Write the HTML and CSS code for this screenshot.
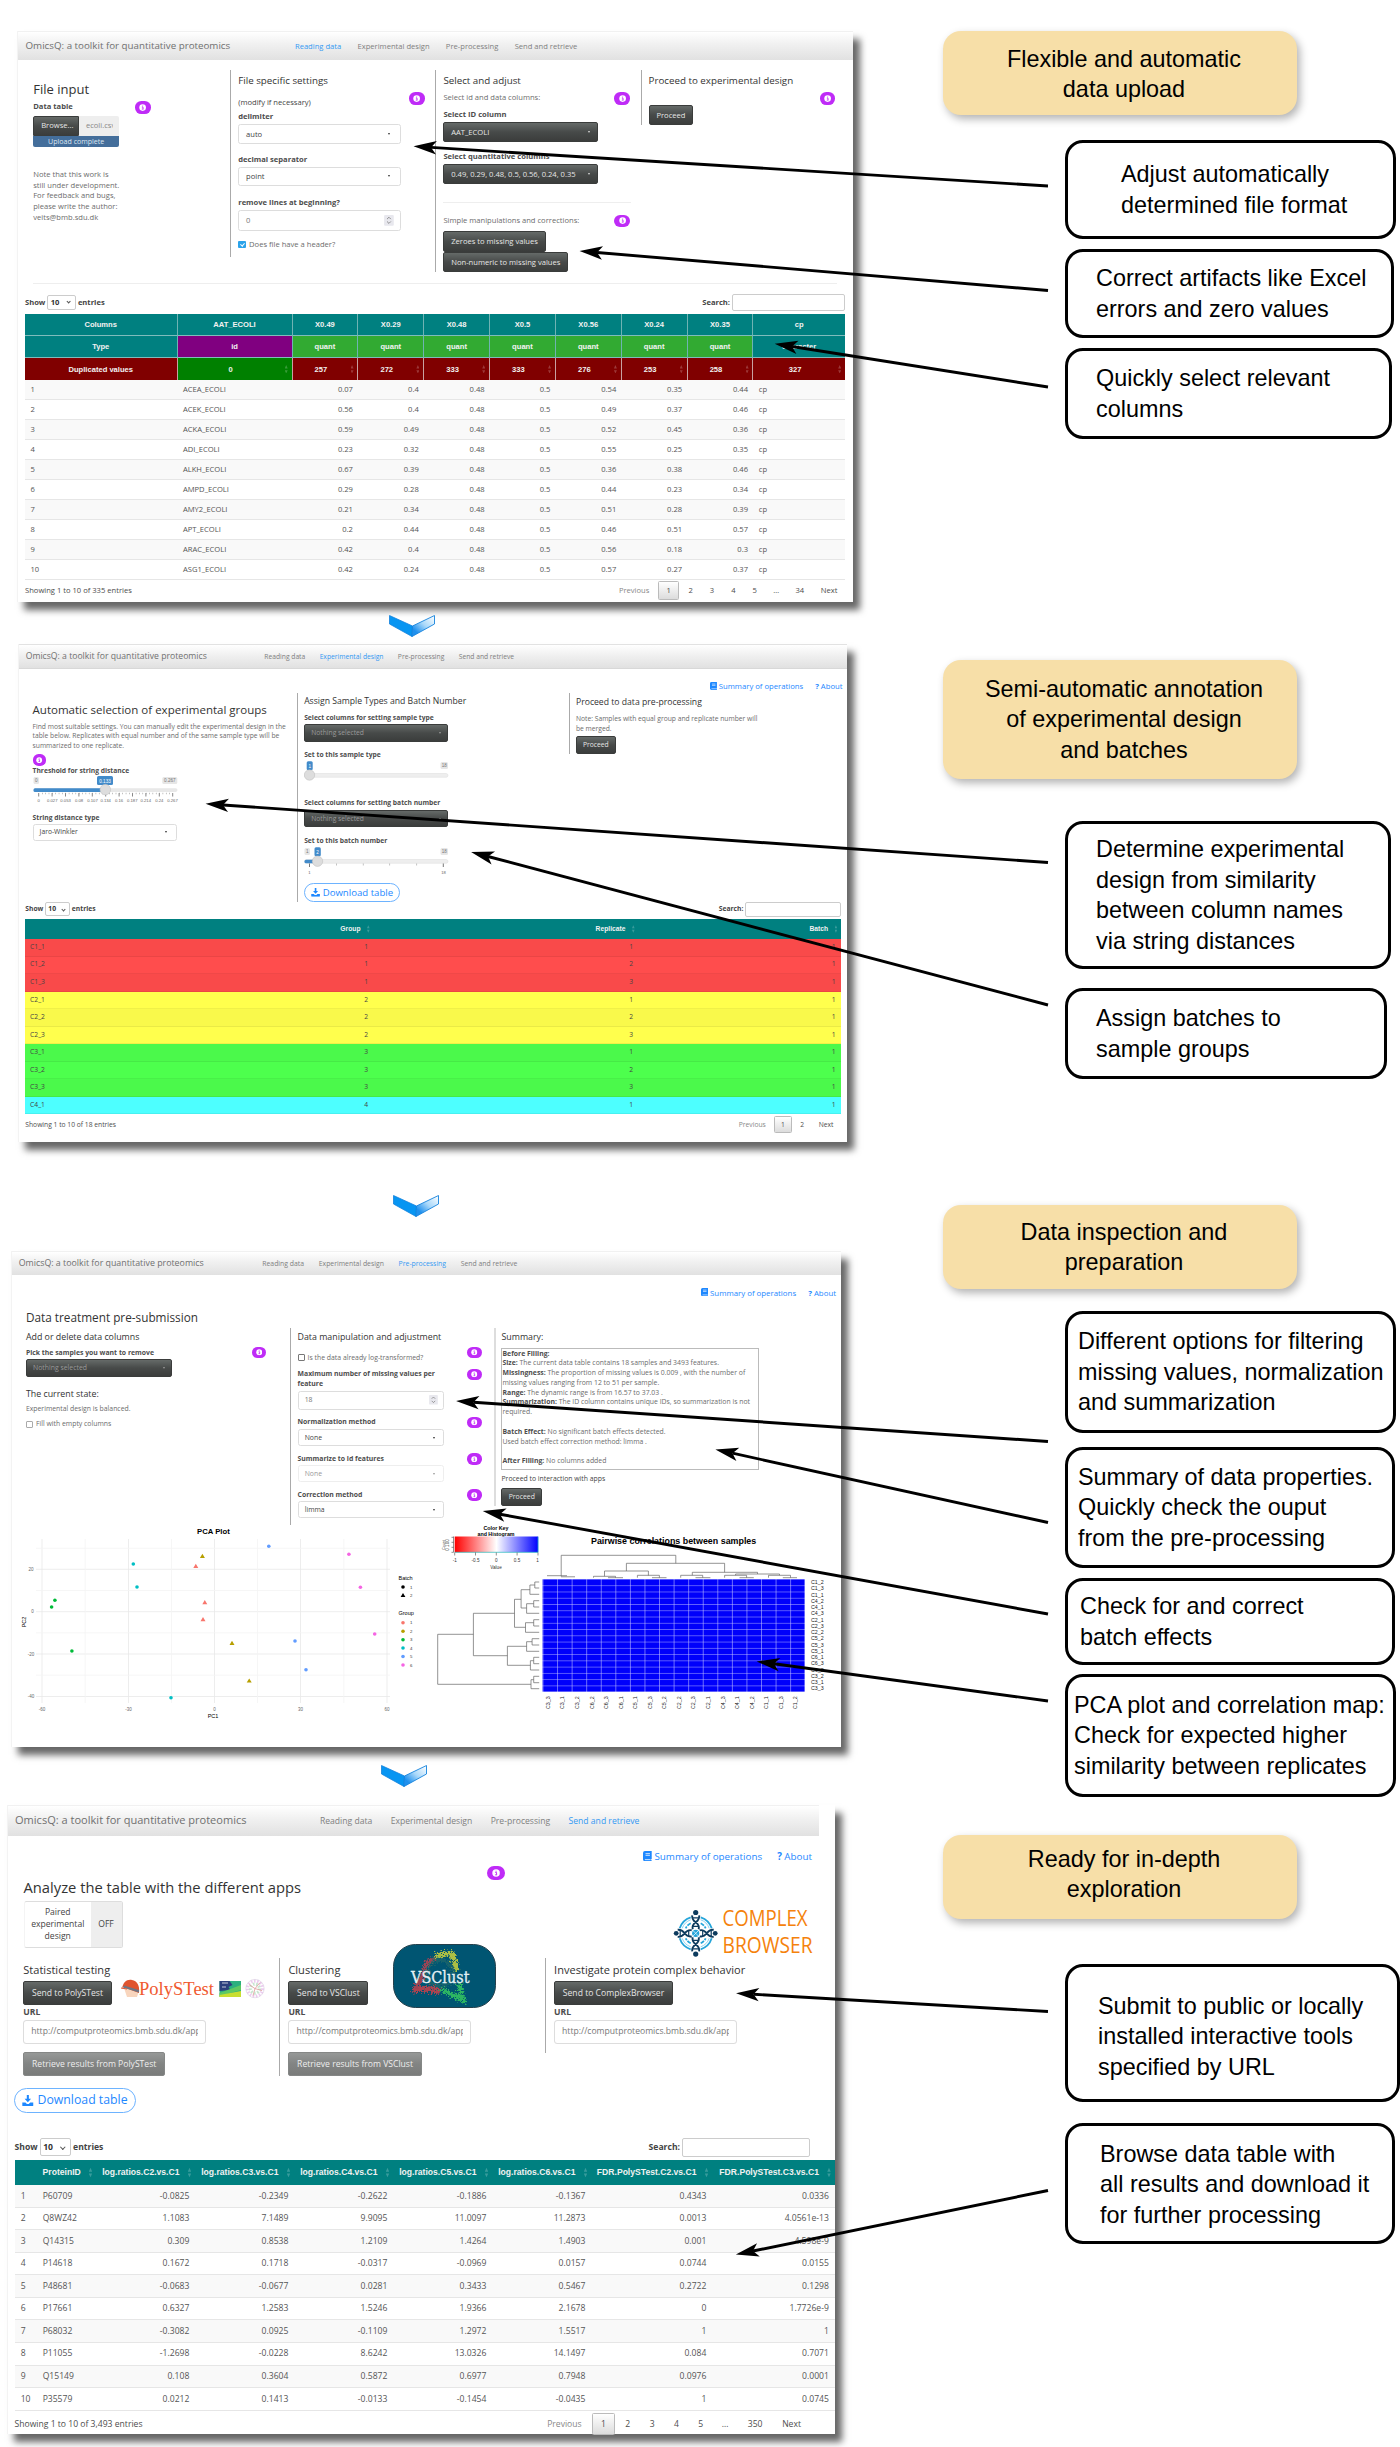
FILE: index.html
```html
<!DOCTYPE html>
<html lang="en">
<head>
<meta charset="utf-8">
<title>OmicsQ workflow</title>
<link rel="stylesheet" href="styles.css">
</head>
<body>
<svg class="defs" width="0" height="0" aria-hidden="true">
  <defs>
    <symbol id="info" viewBox="0 0 10 10"><circle cx="5" cy="5" r="4.6" fill="#fff"/><path d="M4 4.3h1.6v2.6M3.9 7.1h2.4M5 2.2v1.2" stroke="#bf2bf7" stroke-width="1.2" fill="none"/></symbol>
    <symbol id="book" viewBox="0 0 14 16"><path d="M3 0h11v12.5h-1v2h1V16H3a3 3 0 0 1-3-3V3a3 3 0 0 1 3-3z" fill="#1e88ff"/><path d="M4 4h7M4 6.7h7M3 13.5h9" stroke="#fff" stroke-width="1.2"/></symbol>
    <symbol id="dl" viewBox="0 0 16 16"><path d="M6.5 0h3v5.5h3.2L8 10.5 3.300 5.500h3.200zM0 11h4.500l2.200 2h2.600l2.200-2H16v4.200a.8.8 0 0 1-.8.8H.8a.8.8 0 0 1-.8-.8z" fill="#1e88ff"/></symbol>
    <linearGradient id="shine" x1="0" y1="1" x2="1" y2="0"><stop offset="0.2" stop-color="#1e90ee"/><stop offset="0.55" stop-color="#a9d8fa"/><stop offset="1" stop-color="#fff"/></linearGradient>
    <symbol id="chevron" viewBox="0 0 46 22"><path d="M.5.500 23.500 11l-.500 10.500L.500 9z" fill="#0795f2" stroke="#1482dc" stroke-width=".8"/><path d="M45.500.500 23.500 11l-.500 10.500L45.500 9z" fill="url(#shine)" stroke="#1482dc" stroke-width=".9"/></symbol>
    <linearGradient id="key"><stop offset="0" stop-color="#f00"/><stop offset=".5" stop-color="#fff"/><stop offset="1" stop-color="#00f"/></linearGradient>
    <pattern id="cells" x="542.5" y="1579" width="14.567" height="6.261" patternUnits="userSpaceOnUse"><rect width="14.567" height="6.261" fill="#0000fb"/><path d="M0 0H14.567M0 0V6.261" stroke="#c4c4ff" stroke-width="1.100"/></pattern>
    <filter id="scatter" x="-10%" y="-10%" width="120%" height="120%"><feTurbulence type="fractalNoise" baseFrequency=".7" numOctaves="2" seed="4"/><feDisplacementMap in="SourceGraphic" scale="11" xChannelSelector="R" yChannelSelector="G"/></filter>
    <marker id="head" markerUnits="userSpaceOnUse" markerWidth="24" markerHeight="16" refX="-17.5" refY="7" orient="auto-start-reverse" viewBox="-24 0 24 14" overflow="visible"><path d="M0 7-23 .3-17.500 7-23 13.700z"/></marker>
  </defs>
</svg>
<main class="figure">

<!-- Reading data -->
<section class="panel p1">
  <header class="nav"><span class="brand">OmicsQ: a toolkit for quantitative proteomics</span><a class="on">Reading data</a><a>Experimental design</a><a>Pre-processing</a><a>Send and retrieve</a></header>
  <div class="cols">
    <div class="col file">
      <h3>File input</h3><label>Data table</label>
      <div class="upload"><span class="btn">Browse...</span><span class="fname">ecoli.csv</span></div>
      <div class="progress">Upload complete</div>
      <p class="note">Note that this work is<br>still under development.<br>For feedback and bugs,<br>please write the author:<br>veits@bmb.sdu.dk</p>
      <i class="badge"><svg><use href="#info"/></svg></i>
    </div>
    <div class="col settings">
      <h4>File specific settings</h4><p class="dark">(modify if necessary)</p>
      <label>delimiter</label><div class="select">auto</div>
      <label>decimal separator</label><div class="select">point</div>
      <label>remove lines at beginning?</label><div class="input num">0<svg class="spin" viewBox="0 0 10 11"><rect width="10" height="11" rx="1" fill="#e8e8ee"/><path d="M3 4.300 5 2.300 7 4.300M3 6.700 5 8.700 7 6.700" fill="none" stroke="#777" stroke-width=".8"/></svg></div>
      <div class="check"><i class="box checked"></i>Does file have a header?</div>
      <i class="badge"><svg><use href="#info"/></svg></i>
    </div>
    <div class="col adjust">
      <h4>Select and adjust</h4><p>Select id and data columns:</p>
      <label>Select ID column</label><div class="btn drop">AAT_ECOLI</div>
      <label>Select quantitative columns</label><div class="btn drop">0.49, 0.29, 0.48, 0.5, 0.56, 0.24, 0.35</div>
      <hr><p>Simple manipulations and corrections:</p>
      <span class="btn">Zeroes to missing values</span><span class="btn">Non-numeric to missing values</span>
      <i class="badge"><svg><use href="#info"/></svg></i><i class="badge second"><svg><use href="#info"/></svg></i>
    </div>
    <div class="col proceed"><h4>Proceed to experimental design</h4><span class="btn">Proceed</span><i class="badge"><svg><use href="#info"/></svg></i></div>
  </div>
  <hr class="rule">
  <div class="tools"><b>Show</b><span class="len">10</span><b>entries</b><b class="search">Search:</b><span class="sbox"></span></div>
  <table>
    <colgroup><col class="w1"><col class="w2"><col class="w3"><col class="w3"><col class="w3"><col class="w3"><col class="w3"><col class="w3"><col class="w3"><col></colgroup>
    <thead>
      <tr><th>Columns</th><th>AAT_ECOLI</th><th>X0.49</th><th>X0.29</th><th>X0.48</th><th>X0.5</th><th>X0.56</th><th>X0.24</th><th>X0.35</th><th>cp</th></tr>
      <tr class="type"><th>Type</th><th class="id">id</th><th class="q">quant</th><th class="q">quant</th><th class="q">quant</th><th class="q">quant</th><th class="q">quant</th><th class="q">quant</th><th class="q">quant</th><th>character</th></tr>
      <tr class="dup"><th>Duplicated values</th><th class="zero sort">0</th><th class="sort">257</th><th class="sort">272</th><th class="sort">333</th><th class="sort">333</th><th class="sort">276</th><th class="sort">253</th><th class="sort">258</th><th class="sort">327</th></tr>
    </thead>
    <tbody>
      <tr><td>1<td>ACEA_ECOLI<td>0.07<td>0.4<td>0.48<td>0.5<td>0.54<td>0.35<td>0.44<td>cp</tr>
      <tr><td>2<td>ACEK_ECOLI<td>0.56<td>0.4<td>0.48<td>0.5<td>0.49<td>0.37<td>0.46<td>cp</tr>
      <tr><td>3<td>ACKA_ECOLI<td>0.59<td>0.49<td>0.48<td>0.5<td>0.52<td>0.45<td>0.36<td>cp</tr>
      <tr><td>4<td>ADI_ECOLI<td>0.23<td>0.32<td>0.48<td>0.5<td>0.55<td>0.25<td>0.35<td>cp</tr>
      <tr><td>5<td>ALKH_ECOLI<td>0.67<td>0.39<td>0.48<td>0.5<td>0.36<td>0.38<td>0.46<td>cp</tr>
      <tr><td>6<td>AMPD_ECOLI<td>0.29<td>0.28<td>0.48<td>0.5<td>0.44<td>0.23<td>0.34<td>cp</tr>
      <tr><td>7<td>AMY2_ECOLI<td>0.21<td>0.34<td>0.48<td>0.5<td>0.51<td>0.28<td>0.39<td>cp</tr>
      <tr><td>8<td>APT_ECOLI<td>0.2<td>0.44<td>0.48<td>0.5<td>0.46<td>0.51<td>0.57<td>cp</tr>
      <tr><td>9<td>ARAC_ECOLI<td>0.42<td>0.4<td>0.48<td>0.5<td>0.56<td>0.18<td>0.3<td>cp</tr>
      <tr><td>10<td>ASG1_ECOLI<td>0.42<td>0.24<td>0.48<td>0.5<td>0.57<td>0.27<td>0.37<td>cp</tr>
    </tbody>
  </table>
  <footer class="pager"><span>Showing 1 to 10 of 335 entries</span><span class="prev">Previous</span><span class="cur">1</span><span class="pg">2</span><span class="pg">3</span><span class="pg">4</span><span class="pg">5</span><span class="pg">…</span><span class="pg wide">34</span><span class="next">Next</span></footer>
</section>
<svg class="chev chev1"><use href="#chevron"/></svg>

<!-- Experimental design -->
<section class="panel p2">
  <header class="nav"><span class="brand">OmicsQ: a toolkit for quantitative proteomics</span><a>Reading data</a><a class="on">Experimental design</a><a>Pre-processing</a><a>Send and retrieve</a></header>
  <div class="links"><span><svg class="ico"><use href="#book"/></svg>Summary of operations</span><span><b>?</b> About</span></div>
  <div class="cols">
    <div class="col auto">
      <h3>Automatic selection of experimental groups</h3>
      <p>Find most suitable settings. You can manually edit the experimental design in the<br>table below. Replicates with equal number and of the same sample type will be<br>summarized to one replicate.</p>
      <i class="badge inline"><svg><use href="#info"/></svg></i>
      <label>Threshold for string distance</label>
      <svg class="slider" viewBox="32 777 150 28" width="150" height="28">
        <rect x="32.500" y="778" width="5.500" height="7" rx="1.500" fill="#e6e6e6"/><rect x="96" y="777" width="16" height="9" rx="1.500" fill="#428bca"/><rect x="161.300" y="778" width="15" height="7" rx="1.500" fill="#e6e6e6"/>
        <text x="35.200" y="783.200">0</text><text x="104" y="783.500" class="on">0.133</text><text x="168.800" y="783.200">0.267</text>
        <rect x="32.500" y="789.300" width="144" height="3.600" rx="1.800" fill="#e8e8e8"/><rect x="32.500" y="789.300" width="72" height="3.600" rx="1.500" fill="#428bca"/>
        <path d="M37.700 794v3.500m13.400-3.500v3.500m13.400-3.500v3.500m13.400-3.500v3.500m13.400-3.500v3.500m13.400-3.500v3.500m13.400-3.500v3.500m13.400-3.500v3.500m13.400-3.500v3.500m13.400-3.500v3.500m13.400-3.500v3.500" stroke="#555" stroke-width=".7"/>
        <path d="M41 794.500H170" stroke="#999" stroke-width="1.300" stroke-dasharray=".6 2.750"/>
        <circle cx="104.300" cy="790.600" r="5.300" fill="#ddd" stroke="#bbb" stroke-width=".5"/>
        <g class="tk"><text x="37.700" y="803">0</text><text x="51.300" y="803">0.027</text><text x="64.600" y="803">0.053</text><text x="78" y="803">0.08</text><text x="91.500" y="803">0.107</text><text x="104.700" y="803">0.134</text><text x="118" y="803">0.16</text><text x="131.300" y="803">0.187</text><text x="144.800" y="803">0.214</text><text x="158.300" y="803">0.24</text><text x="171.500" y="803">0.267</text></g>
      </svg>
      <label>String distance type</label><div class="select">Jaro-Winkler</div>
    </div>
    <div class="col assign">
      <h4>Assign Sample Types and Batch Number</h4>
      <label>Select columns for setting sample type</label><div class="btn drop dim">Nothing selected</div>
      <label>Set to this sample type</label>
      <svg class="slider" viewBox="304 761 150 22" width="150" height="22">
        <rect x="306.700" y="761.300" width="6" height="9" rx="1.500" fill="#428bca"/><rect x="440.500" y="762" width="7.500" height="7" rx="1.500" fill="#e6e6e6"/><text x="309.700" y="768" class="on">1</text><text x="444.200" y="767.300">18</text>
        <rect x="304.500" y="773.500" width="143.500" height="3.800" rx="1.900" fill="#eee" stroke="#ddd" stroke-width=".5"/><circle cx="309.500" cy="775" r="5.200" fill="#ddd" stroke="#bbb" stroke-width=".5"/>
      </svg>
      <label>Select columns for setting batch number</label><div class="btn drop dim">Nothing selected</div>
      <label>Set to this batch number</label>
      <svg class="slider" viewBox="304 846 150 28" width="150" height="28">
        <rect x="304.500" y="847" width="5.500" height="7" rx="1.500" fill="#e6e6e6"/><rect x="314.500" y="846.300" width="6.300" height="9" rx="1.500" fill="#428bca"/><rect x="440.500" y="847" width="7.500" height="7" rx="1.500" fill="#e6e6e6"/><text x="307.200" y="852.300">1</text><text x="317.600" y="853" class="on">2</text><text x="444.200" y="852.300">18</text>
        <rect x="304.500" y="858.500" width="143.500" height="3.800" rx="1.900" fill="#eee" stroke="#ddd" stroke-width=".5"/><rect x="304.500" y="858.700" width="13" height="3.500" rx="1.500" fill="#428bca"/>
        <path d="M309.500 862.500v3.500M443.300 862.500v3.500" stroke="#555" stroke-width=".8"/><path d="M336.500 862.500v2m26.800-2v2m26.300-2v2m27-2v2" stroke="#999" stroke-width=".6"/>
        <circle cx="317.500" cy="860.200" r="5.200" fill="#ddd" stroke="#bbb" stroke-width=".5"/><g class="tk"><text x="309.500" y="872.500">1</text><text x="443.500" y="872.500">18</text></g>
      </svg>
      <span class="download"><svg class="ico"><use href="#dl"/></svg>Download table</span>
    </div>
    <div class="col merge"><h4>Proceed to data pre-processing</h4><p>Note: Samples with equal group and replicate number will<br>be merged.</p><span class="btn">Proceed</span></div>
  </div>
  <div class="tools"><b>Show</b><span class="len">10</span><b>entries</b><b class="search">Search:</b><span class="sbox"></span></div>
  <table>
    <colgroup><col class="w1"><col class="w2"><col class="w3"><col></colgroup>
    <thead><tr><th></th><th class="sort">Group</th><th class="sort">Replicate</th><th class="sort">Batch</th></tr></thead>
    <tbody>
      <tr class="red"><td>C1_1<td>1<td>1<td>1</tr>
      <tr class="red"><td>C1_2<td>1<td>2<td>1</tr>
      <tr class="red"><td>C1_3<td>1<td>3<td>1</tr>
      <tr class="yellow"><td>C2_1<td>2<td>1<td>1</tr>
      <tr class="yellow"><td>C2_2<td>2<td>2<td>1</tr>
      <tr class="yellow"><td>C2_3<td>2<td>3<td>1</tr>
      <tr class="green"><td>C3_1<td>3<td>1<td>1</tr>
      <tr class="green"><td>C3_2<td>3<td>2<td>1</tr>
      <tr class="green"><td>C3_3<td>3<td>3<td>1</tr>
      <tr class="cyan"><td>C4_1<td>4<td>1<td>1</tr>
    </tbody>
  </table>
  <footer class="pager"><span>Showing 1 to 10 of 18 entries</span><span class="prev">Previous</span><span class="cur">1</span><span class="pg">2</span><span class="next">Next</span></footer>
</section>
<svg class="chev chev2"><use href="#chevron"/></svg>

<!-- Pre-processing -->
<section class="panel p3">
  <header class="nav"><span class="brand">OmicsQ: a toolkit for quantitative proteomics</span><a>Reading data</a><a>Experimental design</a><a class="on">Pre-processing</a><a>Send and retrieve</a></header>
  <div class="links"><span><svg class="ico"><use href="#book"/></svg>Summary of operations</span><span><b>?</b> About</span></div>
  <h3>Data treatment pre-submission</h3>
  <div class="cols">
    <div class="col remove">
      <h4>Add or delete data columns</h4><label>Pick the samples you want to remove</label><div class="btn drop dim">Nothing selected</div>
      <h4 class="state">The current state:</h4><p>Experimental design is balanced.</p><div class="check"><i class="box"></i>Fill with empty columns</div>
      <i class="badge"><svg><use href="#info"/></svg></i>
    </div>
    <div class="col manip">
      <h4>Data manipulation and adjustment</h4><div class="check"><i class="box strong"></i>Is the data already log-transformed?</div>
      <label>Maximum number of missing values per<br>feature</label><div class="input num">18<svg class="spin" viewBox="0 0 10 11"><rect width="10" height="11" rx="1" fill="#e8e8ee"/><path d="M3 4.300 5 2.300 7 4.300M3 6.700 5 8.700 7 6.700" fill="none" stroke="#777" stroke-width=".8"/></svg></div>
      <label>Normalization method</label><div class="select">None</div>
      <label>Summarize to id features</label><div class="select off">None</div>
      <label>Correction method</label><div class="select">limma</div>
      <i class="badge b1"><svg><use href="#info"/></svg></i><i class="badge b2"><svg><use href="#info"/></svg></i><i class="badge b3"><svg><use href="#info"/></svg></i><i class="badge b4"><svg><use href="#info"/></svg></i><i class="badge b5"><svg><use href="#info"/></svg></i>
    </div>
    <div class="col summary">
      <h4>Summary:</h4>
      <div class="report"><b>Before Filling:</b><br><b>Size:</b> The current data table contains 18 samples and 3493 features.<br><b>Missingness:</b> The proportion of missing values is 0.009 , with the number of<br>missing values ranging from 12 to 51 per sample.<br><b>Range:</b> The dynamic range is from 16.57 to 37.03 .<br><b>Summarization:</b> The ID column contains unique IDs, so summarization is not<br>required.<br><br><b>Batch Effect:</b> No significant batch effects detected.<br>Used batch effect correction method: limma .<br><br><b>After Filling:</b> No columns added</div>
      <p class="dark">Proceed to interaction with apps</p><span class="btn">Proceed</span>
    </div>
  </div>
  <svg class="plots" viewBox="11 1525 830 222">
    <g stroke="#e9e9e9" stroke-width=".8"><path d="M36 1569.300H390M36 1611.700H390M36 1654H390M36 1696.500H390M42 1539V1703M128.500 1539V1703M214.500 1539V1703M300.500 1539V1703M387 1539V1703"/><path stroke="#f4f4f4" d="M36 1548.300H390M36 1590.500H390M36 1632.800H390M36 1675.200H390M85.200 1539V1703M171.500 1539V1703M257.500 1539V1703M343.800 1539V1703"/></g>
    <text class="t" x="213.400" y="1534" font-size="7.700">PCA Plot</text>
    <g font-size="4.500" fill="#666" text-anchor="middle"><text x="31" y="1571">20</text><text x="32.500" y="1613.300">0</text><text x="31" y="1655.600">-20</text><text x="31" y="1698">-40</text><text x="42" y="1711">-60</text><text x="128.500" y="1711">-30</text><text x="214.500" y="1711">0</text><text x="300.500" y="1711">30</text><text x="387" y="1711">60</text></g>
    <text x="213" y="1717.800" font-size="5.500" text-anchor="middle">PC1</text><text transform="translate(25.500 1622) rotate(-90)" font-size="5.500" text-anchor="middle">PC2</text>
    <g fill="#619cff"><circle cx="268.800" cy="1546.300" r="1.800"/><circle cx="295" cy="1641" r="1.800"/><circle cx="306" cy="1669.700" r="1.800"/><circle cx="403" cy="1656.500" r="1.800"/></g>
    <g fill="#f564e3"><circle cx="348.900" cy="1554.300" r="1.800"/><circle cx="360.400" cy="1587.300" r="1.800"/><circle cx="374.700" cy="1634" r="1.800"/><circle cx="403" cy="1665" r="1.800"/></g>
    <g fill="#00bfc4"><circle cx="133.300" cy="1564" r="1.800"/><circle cx="137" cy="1587" r="1.800"/><circle cx="171" cy="1697.700" r="1.800"/><circle cx="403" cy="1648" r="1.800"/></g>
    <g fill="#00ba38"><circle cx="54.900" cy="1600.300" r="1.800"/><circle cx="51.600" cy="1607" r="1.800"/><circle cx="71.900" cy="1651" r="1.800"/><circle cx="403" cy="1639.700" r="1.800"/></g>
    <circle cx="403" cy="1622.700" r="1.800" fill="#f8766d"/><circle cx="403" cy="1631.200" r="1.800" fill="#b79f00"/><circle cx="403" cy="1587" r="1.800"/><path d="M403 1593l2.400 4h-4.800z"/>
    <path fill="#b79f00" d="M202.400 1553.700l2.500 4.200h-5zM232 1640.700l2.500 4.200h-5zM249.200 1678.400l2.500 4.200h-5z"/>
    <path fill="#f8766d" d="M195.800 1563.700l2.500 4.200h-5zM204.800 1600l2.500 4.200h-5zM203 1617l2.500 4.200h-5z"/>
    <g font-size="5.500"><text x="398.500" y="1580">Batch</text><text x="398.500" y="1615.300">Group</text></g>
    <g font-size="4.300" fill="#333"><text x="410" y="1588.500">1</text><text x="410" y="1597">2</text><text x="410" y="1624.200">1</text><text x="410" y="1632.700">2</text><text x="410" y="1641.200">3</text><text x="410" y="1649.500">4</text><text x="410" y="1658">5</text><text x="410" y="1666.500">6</text></g>
    <text class="t" x="496" y="1530" font-size="5.300">Color Key</text><text class="t" x="496" y="1536.300" font-size="5.300">and Histogram</text>
    <rect x="454.700" y="1536.500" width="83.500" height="15.800" fill="url(#key)"/><path d="M454.700 1552.300h83.300v-15.500" fill="none" stroke="#2bb" stroke-width=".7"/><path d="M454.700 1552.500v3m20.800-3v3m20.800-3v3m20.800-3v3m20.900-3v3M453.500 1536.500v15.800m0 0h-2m2-5h-2m2-5h-2m2-5h-2" fill="none" stroke="#444" stroke-width=".6"/>
    <g font-size="4.600" text-anchor="middle" fill="#333"><text x="454.700" y="1562">-1</text><text x="475.500" y="1562">-0.5</text><text x="496.300" y="1562">0</text><text x="517" y="1562">0.5</text><text x="537.500" y="1562">1</text><text x="496" y="1569">Value</text><text transform="translate(448.500 1545) rotate(-90)">0 100</text><text transform="translate(445 1545) rotate(-90)" font-size="3.500">Count</text></g>
    <text class="t" x="673.600" y="1543.500" font-size="8.900">Pairwise correlations between samples</text>
    <g fill="none" stroke="#666" stroke-width=".7">
      <path d="M547 1575.700h20M561 1576.800h14M561.200 1576.300v-21h114.600v8M626.400 1571v-7.700h98.200v9M604.500 1576.300v-5.300h43.900v4.500M692.300 1575.300v-3h65.200v1.700M735.600 1575.300v-1.300h43.900v1.300M593.500 1577.700v-1.400h22v1.400M608 1577.700h15M637.400 1577.700v-2.400h22v2.400M652 1577.700h14.500M680.700 1577.700v-2.400h22v2.400M695.500 1577.700h14.900M724.600 1577.700v-2.400h22v2.400M739.500 1577.700h14.300M768.500 1577.700v-2.400h22v2.400M782.800 1577.700h14.200"/>
      <path d="M473.400 1634.300h-35.700v50h93.300M514.500 1613.300h-41.100v42.400h34M521.100 1599.300h-6.600v28h11M530 1589.700h-8.900v18.300h5.500M534.800 1585h-4.900v9.300h9.300M539.200 1582h-4.400v6h4.400M533.700 1603.700h-7.100v9.600h12.600M539.200 1600.700h-5.500v6.300h5.500M533.700 1622.700h-8.200v9.600h13.700M539.200 1619.700h-5.500v6.300h5.500M526.600 1646.300h-19.200v19h23M532 1641.700h-5.400v9.600h12.600M539.200 1638.700h-7.100v6.300h7.100M533.700 1660.700h-3.300v9.300h8.800M539.200 1657.300h-5.500v6.400h5.500M533.700 1679.700h-2.700v9h8.200M539.200 1676.300h-5.500v6.400h5.500"/>
    </g>
    <rect x="542.500" y="1579" width="262.200" height="112.700" fill="url(#cells)"/>
    <g font-size="5.300" fill="#222"><text x="811" y="1584">C1_2</text><text x="811" y="1590.300">C1_3</text><text x="811" y="1596.500">C1_1</text><text x="811" y="1602.800">C4_2</text><text x="811" y="1609">C4_1</text><text x="811" y="1615.300">C4_3</text><text x="811" y="1621.500">C2_1</text><text x="811" y="1627.800">C2_3</text><text x="811" y="1634">C2_2</text><text x="811" y="1640.300">C5_2</text><text x="811" y="1646.500">C5_3</text><text x="811" y="1652.800">C5_1</text><text x="811" y="1659">C6_1</text><text x="811" y="1665.300">C6_3</text><text x="811" y="1671.500">C6_2</text><text x="811" y="1677.800">C3_2</text><text x="811" y="1684">C3_1</text><text x="811" y="1690.300">C3_3</text></g>
    <g font-size="5.300" fill="#222" transform="translate(0 1709) rotate(-90)"><text x="0" y="549.700">C3_3</text><text x="0" y="564.300">C3_1</text><text x="0" y="578.900">C3_2</text><text x="0" y="593.500">C6_2</text><text x="0" y="608">C6_3</text><text x="0" y="622.600">C6_1</text><text x="0" y="637.200">C5_1</text><text x="0" y="651.700">C5_3</text><text x="0" y="666.300">C5_2</text><text x="0" y="680.900">C2_2</text><text x="0" y="695.400">C2_3</text><text x="0" y="710">C2_1</text><text x="0" y="724.600">C4_3</text><text x="0" y="739.100">C4_1</text><text x="0" y="753.700">C4_2</text><text x="0" y="768.300">C1_1</text><text x="0" y="782.800">C1_3</text><text x="0" y="797.400">C1_2</text></g>
  </svg>
</section>
<svg class="chev chev3"><use href="#chevron"/></svg>

<!-- Send and retrieve -->
<section class="panel p4">
  <header class="nav"><span class="brand">OmicsQ: a toolkit for quantitative proteomics</span><a>Reading data</a><a>Experimental design</a><a>Pre-processing</a><a class="on">Send and retrieve</a></header>
  <div class="links"><span><svg class="ico"><use href="#book"/></svg>Summary of operations</span><span><b>?</b> About</span></div>
  <h3>Analyze the table with the different apps</h3>
  <div class="switch"><span>Paired<br>experimental<br>design</span><span class="off">OFF</span></div>
  <i class="badge"><svg><use href="#info"/></svg></i>
  <div class="cols">
    <div class="col stat">
      <h4>Statistical testing</h4>
      <div class="send"><span class="btn">Send to PolySTest</span>
        <svg class="polylogo" viewBox="120 1977 146 24" width="146" height="24">
          <path d="M124 1988l3 9h10l2-6z" fill="#f8d5bd"/><path d="M122 1989c1-7 5-10 10-9 5 1 8 5 7 13l-16-6z" fill="#e0542f"/><path d="M124 1985.500l15 4.500v2.500l-16-5z" fill="#6f7583"/><path d="M121 1988l6 1" stroke="#e0542f"/>
          <text x="139" y="1994.500" font-family="Liberation Serif, serif" font-size="18.500" fill="#f05a30" textLength="75" lengthAdjust="spacingAndGlyphs">PolySTest</text>
          <rect x="219.500" y="1981" width="21.500" height="16" fill="#2bb07f"/><path d="M219.500 1981h10l3 4-4 2 2 3-11 1z" fill="#2b3f7d"/><path d="M219.500 1993l21.500-8v5l-21.500 6z" fill="#5ec962"/><path d="M219.500 1995l21.500-4v6h-21.500z" fill="#c8de30"/><path d="M222 1983h6M222 1987h4" stroke="#fff" stroke-width=".7"/>
          <g fill="none" stroke-width="3.200" stroke-dasharray="1.600 1.500" opacity=".65"><circle cx="255" cy="1988.600" r="7.500" stroke="#e3b0e8"/><circle cx="255" cy="1988.600" r="4.500" stroke="#a9d9b6"/></g><circle cx="255" cy="1988.600" r="9.200" fill="none" stroke="#d8cfe0" stroke-width=".6"/><path d="M255 1988.600l5-6M255 1988.600l-6-4M255 1988.600l-2 7M255 1988.600l7 2" stroke="#e09a9a" stroke-width=".8"/>
        </svg></div>
      <label>URL</label><div class="input url">http://computproteomics.bmb.sdu.dk/apps</div><span class="btn faded">Retrieve results from PolySTest</span>
    </div>
    <div class="col clust"><h4>Clustering</h4><span class="btn">Send to VSClust</span><label>URL</label><div class="input url">http://computproteomics.bmb.sdu.dk/apps</div><span class="btn faded">Retrieve results from VSClust</span></div>
    <div class="col cpx"><h4>Investigate protein complex behavior</h4><span class="btn">Send to ComplexBrowser</span><label>URL</label><div class="input url">http://computproteomics.bmb.sdu.dk/apps</div></div>
  </div>
  <svg class="vslogo" viewBox="393 1944 103 64" width="103" height="64">
    <rect x="393.500" y="1944.500" width="102" height="63" rx="22" fill="#005572" stroke="#24404c"/>
    <g fill="none" filter="url(#scatter)" opacity=".85"><path d="M412 1990q18-3 28 2" stroke="#c9404c" stroke-width="6"/><path d="M415 1988q10-12 11-24l9-6" stroke="#b8404f" stroke-width="5"/><path d="M435 1957q12-5 18-2l4 16" stroke="#cbd23e" stroke-width="5"/><path d="M441 1989l22 11-4-17" stroke="#35c860" stroke-width="5"/><circle cx="440" cy="1973" r="13" stroke="#2f7268" stroke-width="4" opacity=".6"/></g>
    <text x="411" y="1983" font-family="DejaVu Serif, serif" font-size="16.500" fill="#e4f1f5" stroke="#e4f1f5" stroke-width=".3" textLength="58.500" lengthAdjust="spacingAndGlyphs">VSClust</text>
  </svg>
  <svg class="cblogo" viewBox="672 1898 148 64" width="148" height="64">
    <g transform="translate(695.700 1933.300)"><g fill="none" stroke="#25a5da" stroke-width="1.800"><path d="M5-16A17 17 0 0 1 16-5M-5-16A17 17 0 0 0-16-5M5 16A17 17 0 0 0 16 5M-5 16A17 17 0 0 1-16 5"/><path d="M5-10A11 11 0 0 1 10-5M-5-10A11 11 0 0 0-10-5M5 10A11 11 0 0 0 10 5M-5 10A11 11 0 0 1-10 5" stroke-dasharray="4 1"/><path d="M5-13.500A14 14 0 0 1 13.500-5M-5-13.500A14 14 0 0 0-13.500-5M5 13.500A14 14 0 0 0 13.500 5M-5 13.500A14 14 0 0 1-13.500 5" stroke="#8fd3ef" stroke-width="1"/></g>
      <g fill="none" stroke="#0d3b5e" stroke-width="1.900"><path d="M-3.500-18Q-4-14 0-11T3-4M3.500-18Q4-14 0-11T-3-4M-3.500 18Q-4 14 0 11T3 4M3.500 18Q4 14 0 11T-3 4M-18-3.500Q-14-4-11 0T-4 3M-18 3.500Q-14 4-11 0T-4-3M18-3.500Q14-4 11 0T4 3M18 3.500Q14 4 11 0T4-3"/><path d="M-3-15.500h6M-3-7h6M-3 15.500h6M-3 7h6M-15.500-3v6M-7-3v6M15.500-3v6M7-3v6" stroke-width="1.200"/></g>
      <g fill="#0d3b5e"><circle cy="-20.800" r="2.600"/><circle cy="20.800" r="2.600"/><circle cx="-19.500" r="2.400"/><circle cx="19.500" r="2.400"/></g><circle r="3.600" fill="#25a5da"/><path d="M-3-3 3 3M3-3-3 3" stroke="#fff" stroke-width=".7"/></g>
    <g font-family="Open Sans, sans-serif" font-size="21.500" fill="#f5820c"><text x="722.500" y="1926" textLength="85" lengthAdjust="spacingAndGlyphs">COMPLEX</text><text x="722.500" y="1952.500" textLength="90" lengthAdjust="spacingAndGlyphs">BROWSER</text></g>
  </svg>
  <span class="download"><svg class="ico"><use href="#dl"/></svg>Download table</span>
  <div class="tools"><b>Show</b><span class="len">10</span><b>entries</b><b class="search">Search:</b><span class="sbox"></span></div>
  <table>
    <colgroup><col class="w1"><col class="w2"><col class="w3"><col class="w3"><col class="w3"><col class="w3"><col class="w3"><col class="w4"><col></colgroup>
    <thead><tr><th></th><th class="sort">ProteinID</th><th class="sort">log.ratios.C2.vs.C1</th><th class="sort">log.ratios.C3.vs.C1</th><th class="sort">log.ratios.C4.vs.C1</th><th class="sort">log.ratios.C5.vs.C1</th><th class="sort">log.ratios.C6.vs.C1</th><th class="sort">FDR.PolySTest.C2.vs.C1</th><th class="sort">FDR.PolySTest.C3.vs.C1</th></tr></thead>
    <tbody>
      <tr><td>1<td>P60709<td>-0.0825<td>-0.2349<td>-0.2622<td>-0.1886<td>-0.1367<td>0.4343<td>0.0336</tr>
      <tr><td>2<td>Q8WZ42<td>1.1083<td>7.1489<td>9.9095<td>11.0097<td>11.2873<td>0.0013<td>4.0561e-13</tr>
      <tr><td>3<td>Q14315<td>0.309<td>0.8538<td>1.2109<td>1.4264<td>1.4903<td>0.001<td>4.598e-9</tr>
      <tr><td>4<td>P14618<td>0.1672<td>0.1718<td>-0.0317<td>-0.0969<td>0.0157<td>0.0744<td>0.0155</tr>
      <tr><td>5<td>P48681<td>-0.0683<td>-0.0677<td>0.0281<td>0.3433<td>0.5467<td>0.2722<td>0.1298</tr>
      <tr><td>6<td>P17661<td>0.6327<td>1.2583<td>1.5246<td>1.9366<td>2.1678<td>0<td>1.7726e-9</tr>
      <tr><td>7<td>P68032<td>-0.3082<td>0.0925<td>-0.1109<td>1.2972<td>1.5517<td>1<td>1</tr>
      <tr><td>8<td>P11055<td>-1.2698<td>-0.0228<td>8.6242<td>13.0326<td>14.1497<td>0.084<td>0.7071</tr>
      <tr><td>9<td>Q15149<td>0.108<td>0.3604<td>0.5872<td>0.6977<td>0.7948<td>0.0976<td>0.0001</tr>
      <tr><td>10<td>P35579<td>0.0212<td>0.1413<td>-0.0133<td>-0.1454<td>-0.0435<td>1<td>0.0745</tr>
    </tbody>
  </table>
  <footer class="pager"><span>Showing 1 to 10 of 3,493 entries</span><span class="prev">Previous</span><span class="cur">1</span><span class="pg">2</span><span class="pg">3</span><span class="pg">4</span><span class="pg">5</span><span class="pg">…</span><span class="pg wide">350</span><span class="next">Next</span></footer>
</section>

<!-- Stage titles and callouts -->
<h2 class="stage s1">Flexible and automatic<br>data upload</h2>
<h2 class="stage s2">Semi-automatic annotation<br>of experimental design<br>and batches</h2>
<h2 class="stage s3">Data inspection and<br>preparation</h2>
<h2 class="stage s4">Ready for in-depth<br>exploration</h2>
<p class="call c1">Adjust automatically<br>determined file format</p>
<p class="call c2">Correct artifacts like Excel<br>errors and zero values</p>
<p class="call c3">Quickly select relevant<br>columns</p>
<p class="call c4">Determine experimental<br>design from similarity<br>between column names<br>via string distances</p>
<p class="call c5">Assign batches to<br>sample groups</p>
<p class="call c6">Different options for filtering<br>missing values, normalization<br>and summarization</p>
<p class="call c7">Summary of data properties.<br>Quickly check the ouput<br>from the pre-processing</p>
<p class="call c8">Check for and correct<br>batch effects</p>
<p class="call c9">PCA plot and correlation map:<br>Check for expected higher<br>similarity between replicates</p>
<p class="call c10">Submit to public or locally<br>installed interactive tools<br>specified by URL</p>
<p class="call c11">Browse data table with<br>all results and download it<br>for further processing</p>

<svg class="arrows" viewBox="0 0 1400 2447">
  <g stroke="#000" stroke-width="2.900" fill="none">
    <path marker-end="url(#head)" d="M1048 186 431 147.400"/>
    <path marker-end="url(#head)" d="M1048 290.500 597 252.500"/>
    <path marker-end="url(#head)" d="M1048 387 792 346.500"/>
    <path marker-end="url(#head)" d="M1048 862.500 223 805"/>
    <path marker-end="url(#head)" d="M1048 1005 488 856.500"/>
    <path marker-end="url(#head)" d="M1048 1441.500 473.500 1402.200"/>
    <path marker-end="url(#head)" d="M1048 1522.500 732.500 1453.200"/>
    <path marker-end="url(#head)" d="M1048 1614 500 1514.200"/>
    <path marker-end="url(#head)" d="M1048 1701 774 1663.800"/>
    <path marker-end="url(#head)" d="M1048 2011.500 753.500 1994.300"/>
    <path marker-end="url(#head)" d="M1048 2190.500 753 2251"/>
  </g>
</svg>
</main>
</body>
</html>
```

FILE: styles.css
```css
* { box-sizing: border-box; }
body { margin: 0; background: #fff; font-family: "Open Sans", sans-serif; }
h2, h3, h4, p, hr { margin: 0; font-weight: 400; }
i { font-style: normal; }
.defs { position: absolute; }
.figure { position: relative; width: 1400px; height: 2447px; overflow: hidden; }

/* windows on the figure canvas */
.panel { position: absolute; background: #fff; color: #6c6c6c; line-height: 1.43; box-shadow: 7px 8px 7px rgba(0, 0, 0, .6); white-space: nowrap; border-left: 1px solid #f3f3f3; }
.p1 { left: 17px; top: 31px; width: 836px; height: 571px; font-size: 7.6px; }
.p2 { left: 18px; top: 644px; width: 829px; height: 498px; font-size: 6.73px; }
.p3 { left: 11px; top: 1251px; width: 830px; height: 496px; font-size: 6.87px; }
.p4 { left: 7px; top: 1805px; width: 828px; height: 629px; font-size: 8.6px; }

.nav { display: flex; align-items: center; background: linear-gradient(#fff, #f0f0f0 45%, #e1e1e1); border-top: 1px solid #f1f1f1; color: #808080; }
.p2 .nav { border-top-color: #e2e2e2; border-bottom: 1px solid #d8d8d8; }
.brand { flex: 0 0 27.57em; font-size: 1.286em; color: #707070; margin-top: -1px; }
.nav a { margin-right: 2.14em; }
.nav .on { color: #3399f3; }
.p1 .nav { height: 29px; padding-left: 7.5px; }
.p2 .nav { height: 25px; padding-left: 6.7px; }
.p3 .nav { height: 24px; padding-left: 6.7px; }
.p4 .nav { height: 30.5px; padding-left: 7px; width: 811px; }

.links { display: flex; justify-content: flex-end; gap: 12px; color: #1e88ff; font-size: 1.143em; line-height: 14px; }
.links .ico { width: .9em; height: 1.05em; margin-right: .25em; vertical-align: -.12em; }
.p2 .links { height: 24px; align-items: flex-end; padding-right: 4.5px; }
.p3 .links { height: 35px; align-items: center; padding-right: 5px; }
.p4 .links { height: 42.5px; align-items: center; padding-right: 23px; gap: 15px; }

.cols { display: flex; align-items: flex-start; margin-left: 7px; }
.col { position: relative; flex: none; display: grid; justify-items: start; padding-left: 1.08em; align-content: start; }
.col + .col { border-left: 1px solid #aaa; padding-left: calc(1.08em - 1.2px); }
h3 { font-size: 1.714em; color: #333; line-height: 1.1; }
h4 { font-size: 1.286em; color: #333; line-height: 1.1; align-self: center; }
.col p { align-self: center; }
.col .dark { color: #444; }
label { font-weight: 700; color: #4d4d4d; align-self: end; line-height: 2em; }
hr { border: 0; border-top: 1px solid #eee; }

.btn { display: flex; align-items: center; padding: 0 .9em; color: #e6e6e6; background: linear-gradient(#656a68, #474a49 50%, #3b3d3c); border: .5px solid #3a3c3b; border-radius: 2px; }
.drop { position: relative; }
.drop::after, .select::after { content: ""; margin-left: auto; border: .26em solid transparent; border-top: .33em solid #ddd; border-bottom: 0; }
.dim, .dim::after { color: #999; }
.dim::after { border-top-color: #999; }
.faded { background: linear-gradient(#969897, #828483 50%, #7a7c7b); border-color: #858786; color: #eee; }
.select, .input { display: flex; align-items: center; padding: 0 .9em; border: 1px solid #ddd; border-radius: 2.5px; background: #fff; color: #444; }
.select::after { border-top-color: #333; margin-right: .35em; }
.input { color: #777; }
.off.select { color: #999; border-color: #eee; }
.off.select::after { border-top-color: #999; }
.spin { width: 1.3em; height: 1.4em; margin-left: auto; margin-right: -.1em; }
.check { display: flex; align-items: center; gap: .45em; align-self: center; }
.box { width: 7px; height: 7px; border: .8px solid #aaa; border-radius: 1px; background: #fff; }
.box.strong { border-color: #777; }
.box.checked { width: 7.5px; height: 7.5px; border: 0; position: relative; background: #2ba3ea; }
.box.checked::after { content: ""; position: absolute; left: 2.7px; top: 1.2px; width: 1.6px; height: 3.2px; border: solid #fff; border-width: 0 1px 1px 0; transform: rotate(40deg); }
.badge { position: absolute; width: 2.07em; height: 1.66em; border-radius: .83em; background: #bf2bf7; display: flex; align-items: center; justify-content: center; }
.badge svg { width: .95em; height: .95em; }
.badge.inline { position: static; }
.download { display: flex; align-items: center; justify-content: center; gap: .3em; color: #1e88ff; border: 1px solid #6db3ff; border-radius: 1.3em; font-size: 1.43em; }
.download .ico { width: .95em; height: .9em; }

/* Reading data */
.p1 .cols { height: 213px; padding-top: 10px; }
.p1 .col { width: 205.2px; }
.file { grid-template-rows: 30px 15.5px 20px 11px 70px; }
.file h3 { align-self: end; margin-bottom: 4px; }
.file label { align-self: center; margin-top: -2px; }
.upload { display: flex; width: 86px; }
.upload .btn { width: 45.7px; padding: 0 0 0 7px; border-radius: 2px 0 0 0; }
.fname { flex: 1; background: #eee; display: flex; align-items: center; padding-left: 7px; overflow: hidden; border-right: 6px solid #eee; color: #888; border-radius: 0 2px 0 0; }
.progress { width: 86px; background: #446e9b; color: #dfe8f2; text-align: center; font-size: .93em; line-height: 11px; border-radius: 0 0 2px 2px; }
.col .note { align-self: end; line-height: 10.85px; margin-bottom: -6.500px; }
.file .badge { left: 110px; top: 31px; }
.settings { height: 187px; grid-template-rows: 23.400px 17.800px 13.300px 19.200px 23.600px 18.400px 24.600px 20.400px 27.500px; }
.settings .select, .settings .input { width: 162.500px; }
.settings .badge { left: 178px; top: 22px; }
.adjust { height: 202.300px; grid-template-rows: 23.400px 9px 19.600px 20px 22px 20.500px 18.500px 28.300px 20.300px 20.700px; }
.adjust .drop { width: 154.300px; }
.adjust hr { width: 188px; align-self: end; }
.adjust hr + p { align-self: end; margin-bottom: 5px; }
.adjust .badge { left: 178px; top: 22px; }
.adjust .second { top: 144.700px; }
.proceed { height: 55px; grid-template-rows: 23.400px 31.600px; }
.proceed .btn { align-self: end; height: 20px; }
.proceed .badge { left: 178px; top: 22px; }
.rule { margin: 10px 16px 10px 15px; }

/* table tools */
.tools { display: flex; align-items: center; gap: 2px; color: #333; margin-left: 7px; }
.tools b { color: #444; }
.search { margin-left: auto; }
.len, .sbox { border: 1px solid #ccc; border-radius: 2px; background: #fff; }
.len { font-weight: 700; position: relative; padding-left: .3em; display: flex; align-items: center; }
.len::after { content: ""; position: absolute; right: .6em; top: 37%; width: .3em; height: .3em; border: solid #555; border-width: 0 .8px .8px 0; transform: rotate(45deg); }
.p1 .tools { height: 16.500px; margin-right: 8px; }
.p1 .len { width: 28.500px; height: 15.500px; }
.p1 .sbox { width: 113px; height: 16.500px; }
.p2 .tools { height: 15px; margin-right: 6.300px; margin-left: 6.300px; }
.p2 .len { width: 24.500px; height: 14px; }
.p2 .sbox { width: 95.400px; height: 15px; }
.p4 .tools { height: 19.500px; margin: 25px 25px 0 6.500px; }
.p4 .len { width: 31.500px; height: 18px; }
.p4 .sbox { width: 128px; height: 19.500px; }

table { border-collapse: separate; border-spacing: 0; table-layout: fixed; color: #555; margin-left: 7px; line-height: 1; }
th { background: teal; color: #f2f2f2; font-family: "Liberation Sans", Arial, sans-serif; font-weight: 700; padding: 0; position: relative; }
td { padding: 0 .714em; border-bottom: 1px solid #e6e6e6; text-align: right; }
tbody tr:nth-child(odd) td { background: #f9f9f9; }
.sort::after { content: ""; position: absolute; right: .5em; top: calc(50% - .55em); width: .4em; height: 1.1em; background: rgba(255, 255, 255, .22); clip-path: polygon(50% 0, 100% 40%, 0 40%, 0 60%, 100% 60%, 50% 100%, 0 60%, 0 40%); }
.p1 table { width: 820px; height: 266px; margin-top: 3.800px; }
.p1 .w1 { width: 152.500px; } .p1 .w2 { width: 115px; } .p1 .w3 { width: 65.850px; }
.p1 th { height: 22px; border-right: 1px solid #6fb3b3; border-bottom: 1px solid #7fbcbc; }
.p1 th:last-child { border-right: 0; }
.p1 .type th.id { background: purple; } .p1 .type th.q { background: #32aa32; }
.p1 .dup th { background: maroon; border-bottom: 0; border-right-color: #c9a0a0; padding-right: 8px; }
.p1 .dup th:first-child { padding-right: 0; }
.p1 .dup th.zero { background: green; }
.p1 td { height: 20px; }
td:nth-child(1), td:nth-child(2), .p1 td:last-child { text-align: left; }
.p2 table { width: 815.300px; margin: 2.300px 0 0 6.300px; }
.p2 .w1 { width: 82px; } .p2 .w2 { width: 265.700px; } .p2 .w3 { width: 265px; }
.p2 th { height: 20px; text-align: right; padding-right: 12.500px; }
.p2 td { height: 17.550px; padding-right: 5px; border-color: rgba(0, 0, 0, .06); color: #444; }
.p2 td:nth-child(2) { text-align: right; }
.p2 .red td { background: #ff4d4d; } .p2 .yellow td { background: #ffff4d; } .p2 .green td { background: #4dff4d; } .p2 .cyan td { background: #4dffff; }
.p2 .red:nth-child(odd) td { background: #f94a4a; } .p2 .yellow:nth-child(odd) td { background: #f9f94b; } .p2 .green:nth-child(odd) td { background: #4bf94b; }
.p4 table { width: 820.500px; margin: 3px 0 0 6.500px; }
.p4 .w1 { width: 22px; } .p4 .w2 { width: 60px; } .p4 .w3 { width: 99px; } .p4 .w4 { width: 121px; }
.p4 th { height: 25.200px; text-align: right; padding-right: 16px; }
.p4 th:nth-child(2) { text-align: left; padding-left: 6.100px; }
.p4 td { height: 22.550px; }

.pager { display: flex; align-items: center; color: #4d4d4d; margin-left: 7px; }
.prev { margin-left: auto; color: #888; }
.cur { align-self: stretch; display: flex; align-items: center; justify-content: center; border: 1px solid #bbb; border-radius: 1.500px; background: linear-gradient(#fff, #dcdcdc); }
.pg { text-align: center; }
.p1 .pager { height: 20px; padding: 1px 15.500px 0 0; }
.p1 .cur { width: 20.500px; margin: 0 1px 0 9px; } .p1 .pg { width: 21.400px; } .p1 .wide { width: 26px; } .p1 .next { margin-left: 8px; }
.p2 .pager { height: 17px; margin: 2px 13.500px 0 6.300px; }
.p2 .cur { width: 18.500px; margin-left: 8px; } .p2 .pg { width: 20px; } .p2 .next { margin-left: 6.500px; }
.p4 .pager { height: 24px; padding: 2px 34px 0 0; margin-left: 6.500px; }
.p4 .cur { width: 22.500px; margin: 0 1px 0 10.500px; } .p4 .pg { width: 24.300px; } .p4 .wide { width: 36px; } .p4 .next { margin-left: 9px; }

/* Experimental design */
.slider text { font: 4.600px "Liberation Sans", sans-serif; fill: #777; text-anchor: middle; }
.slider .on { fill: #fff; }
.slider .tk text { font-size: 4.200px; fill: #666; }
.slider { display: block; }
.p2 .cols { height: 208.700px; margin-left: 6.300px; }
.p2 .col { width: 271.800px; }
.auto { grid-template-rows: 27.500px 31px 14px 10px 28.500px 20px 16.500px; }
.auto h3 { align-self: end; margin-bottom: 4px; }
.auto p { line-height: 9.600px; }
.auto .inline { align-self: end; }
.auto label { line-height: 10px; align-self: center; }
.auto .slider + label { align-self: end; line-height: 2em; }
.auto .select { width: 144px; }
.assign { height: 208.500px; grid-template-rows: 18px 13.300px 17.700px 19.500px 24px 24.200px 17.800px 19.500px 36px 19.500px; }
.assign .drop { width: 143.500px; }
.assign .download { width: 95.500px; }
.merge { height: 61px; grid-template-rows: 19px 24px 18px; }
.merge p { line-height: 9.600px; }

/* Pre-processing */
.p3 h3 { height: 14px; line-height: 14px; padding-left: 14px; margin-bottom: 3.500px; }
.p3 .cols { height: 197.500px; margin-left: 6.500px; }
.remove { width: 271.800px; grid-template-rows: 20px 11.800px 18.200px 22.400px 18.800px 11.200px; }
.remove .state { align-self: end; }
.remove .drop { width: 146.300px; }
.remove .badge { left: 233.500px; top: 19.500px; }
.manip { width: 204.200px; height: 197.500px; grid-template-rows: 20px 20px 23.500px 18.500px 19.500px 17px 19.300px 16.700px 19.300px 17.200px; }
.manip .check { align-self: center; }
.manip label:first-of-type { line-height: 9.700px; margin-bottom: 2.500px; }
.manip .select, .manip .input { width: 146.800px; }
.manip .badge { left: 176px; }
.b1 { top: 19.500px; } .b2 { top: 41.500px; } .b3 { top: 89.500px; } .b4 { top: 125.700px; } .b5 { top: 161.800px; }
.summary { height: 178px; grid-template-rows: 20px 122.500px 17.500px 18px; }
.p3 .summary { border-left: 2px solid #ddd; padding-left: 5px; }
.report { width: 257.500px; height: 122.700px; border: 1px solid #bbb; line-height: 9.800px; }
.report b { color: #4d4d4d; }
.plots { display: block; width: 830px; height: 222px; margin-left: -1px; font-family: "Liberation Sans", Arial, sans-serif; }
.plots .t { font-weight: 700; text-anchor: middle; }

/* Send and retrieve */
.p4 h3 { height: 18px; line-height: 18px; padding-left: 15.500px; }
.switch { display: flex; width: 98.500px; height: 46.500px; margin: 5px 0 10px 16px; border: 1px solid #ddd; border-left-color: #f4f4f4; border-radius: 2.500px; color: #444; text-align: center; line-height: 12.300px; }
.switch span { flex: 1; display: grid; place-content: center; }
.switch .off { flex: 0 0 31px; background: #eee; }
.p4 > .badge { left: 479px; top: 60.500px; }
.p4 .cols { margin-left: 6px; }
.p4 .col { width: 266px; height: 118px; grid-template-rows: 23.500px 24px 15px 23.500px 8.500px 23.500px; }
.p4 .stat { width: 265.300px; }
.p4 .col h4 { align-self: center; padding-top: 2px; }
.p4 .col .faded { grid-row: 6; }
.p4 .cpx { height: 95px; padding-left: 7.800px; }
.p4 label { line-height: 1; align-self: center; margin-top: -1px; }
.send { display: flex; align-items: stretch; position: relative; }
.polylogo { position: absolute; left: 97px; top: -4px; }
.url { display: block; line-height: 21.500px; padding: 0; border-inline: 7px solid #fff; box-shadow: 0 0 0 1px #ddd; border-block: 0; height: 21.500px; margin: 1px 0 0 1px; width: 181px; overflow: hidden; }
.vslogo { position: absolute; left: 385px; top: 139px; }
.cblogo { position: absolute; left: 664px; top: 93px; }
.p4 > .download { width: 121.700px; height: 24.500px; margin: 12.500px 0 0 6px; }

/* stage titles */
.stage, .call { position: absolute; font-family: "Liberation Sans", Arial, sans-serif; font-size: 23.400px; line-height: 30.500px; color: #000; white-space: nowrap; }
.stage { left: 943px; width: 354px; display: grid; place-content: center; text-align: center; background: #f7dfa8; border-radius: 18px; padding-left: 8px; box-shadow: 3px 4px 8px rgba(0, 0, 0, .3); }
.s1 { top: 31px; height: 84px; padding-top: 2px; }
.s2 { top: 660px; height: 119px; }
.s3 { top: 1205px; height: 84px; }
.s4 { top: 1835px; height: 84px; padding-bottom: 6px; }

/* callouts */
.call { margin: 0; left: 1065px; border: 3px solid #000; border-radius: 18px; background: #fff; display: grid; align-content: center; padding-left: 28px; }
.c1 { top: 140px; width: 331px; height: 99px; padding-left: 53px; }
.c2 { top: 249px; width: 329px; height: 89px; }
.c3 { top: 348px; width: 327px; height: 91px; }
.c4 { top: 821px; width: 326px; height: 148px; }
.c5 { top: 988px; width: 322px; height: 91px; }
.c6 { top: 1311px; width: 331px; height: 122px; padding-left: 10px; }
.c7 { top: 1447px; width: 330px; height: 121px; padding-left: 10px; }
.c8 { top: 1578px; width: 330px; height: 87px; padding-left: 12px; }
.c9 { top: 1674px; width: 331px; height: 123px; padding-left: 6px; }
.c10 { top: 1964px; width: 335px; height: 138px; padding: 7px 0 0 30px; }
.c11 { top: 2123px; width: 330px; height: 121px; padding: 2px 0 0 32px; }

.chev { position: absolute; width: 46px; height: 22px; }
.chev1 { left: 389px; top: 615px; }
.chev2 { left: 393px; top: 1195px; }
.chev3 { left: 381px; top: 1765px; }
.arrows { position: absolute; inset: 0; width: 1400px; height: 2447px; pointer-events: none; }
```
